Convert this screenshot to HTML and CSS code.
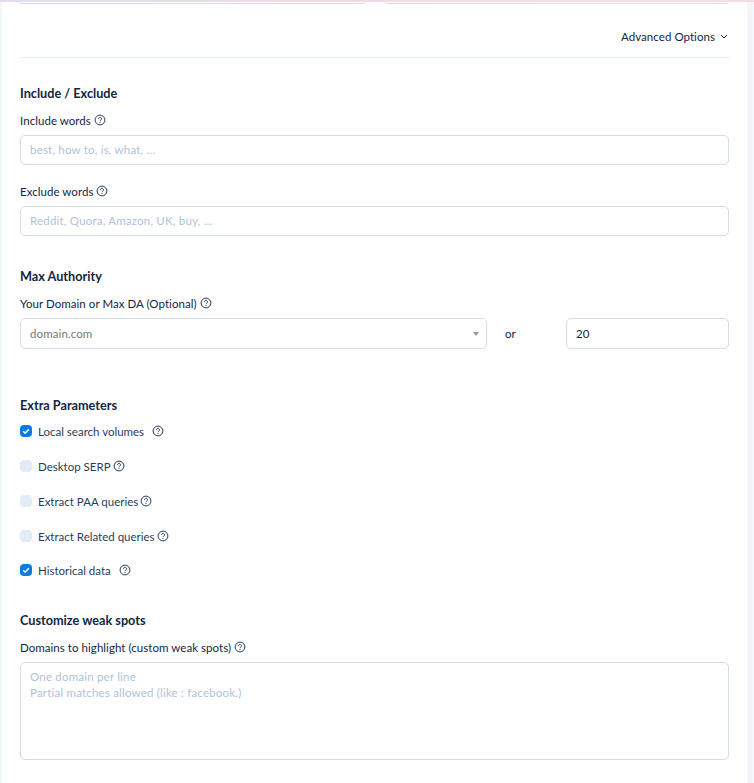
FILE: index.html
```html
<!DOCTYPE html>
<html lang="en">
<head>
    <meta charset="UTF-8">
    <title>Advanced Options</title>
    <link rel="stylesheet" href="styles.css">
</head>
<body>

<svg class="sprite" width="0" height="0">
    <symbol id="help" viewBox="0 0 12 12">
        <circle cx="6" cy="6" r="4.9" fill="none" stroke="currentColor" stroke-width="1"/>
        <path d="M4.5 4.8a1.5 1.5 0 1 1 2.3 1.3c-.5.3-.8.6-.8 1.1" fill="none" stroke="currentColor" stroke-width="1"/>
        <circle cx="6" cy="8.6" r=".6" fill="currentColor"/>
    </symbol>
    <symbol id="tick" viewBox="0 0 12 12">
        <path d="M3.2 6.2l2 2 3.6-4" fill="none" stroke="#fff" stroke-width="1.6"/>
    </symbol>
</svg>

<div class="top-strip"></div>

<main class="card">
    <div class="top-inputs">
        <div class="top-input"></div>
        <div class="top-input top-input-right"></div>
    </div>

    <div class="advanced">
        <span>Advanced Options</span>
        <svg class="chevron" width="8" height="5" viewBox="0 0 8 5"><path d="M1 1l3 3 3-3" fill="none" stroke="currentColor" stroke-width="1"/></svg>
    </div>

    <!-- Include / Exclude -->
    <section class="include">
        <h3>Include / Exclude</h3>
        <label class="field-label">Include words <svg class="help"><use href="#help"/></svg></label>
        <input class="input" type="text" placeholder="best, how to, is, what, ...">
        <label class="field-label exclude-label">Exclude words <svg class="help"><use href="#help"/></svg></label>
        <input class="input" type="text" placeholder="Reddit, Quora, Amazon, UK, buy, ...">
    </section>

    <!-- Max Authority -->
    <section class="authority">
        <h3>Max Authority</h3>
        <label class="field-label">Your Domain or Max DA (Optional) <svg class="help"><use href="#help"/></svg></label>
        <div class="authority-row">
            <div class="select">
                <span>domain.com</span>
                <i class="select-arrow"></i>
            </div>
            <span class="or">or</span>
            <input class="input max-da" type="text" value="20">
        </div>
    </section>

    <!-- Extra Parameters -->
    <section class="extra">
        <h3>Extra Parameters</h3>
        <div class="check"><span class="box box-on"><svg width="12" height="12"><use href="#tick"/></svg></span>Local search volumes <svg class="help help-far"><use href="#help"/></svg></div>
        <div class="check"><span class="box"></span>Desktop SERP <svg class="help"><use href="#help"/></svg></div>
        <div class="check"><span class="box"></span>Extract PAA queries <svg class="help"><use href="#help"/></svg></div>
        <div class="check"><span class="box"></span>Extract Related queries <svg class="help"><use href="#help"/></svg></div>
        <div class="check check-last"><span class="box box-on"><svg width="12" height="12"><use href="#tick"/></svg></span>Historical data <svg class="help help-far"><use href="#help"/></svg></div>
    </section>

    <!-- Customize weak spots -->
    <section class="weak">
        <h3>Customize weak spots</h3>
        <label class="field-label">Domains to highlight (custom weak spots) <svg class="help"><use href="#help"/></svg></label>
        <textarea class="input textarea" placeholder="One domain per line&#10;Partial matches allowed (like : facebook.)"></textarea>
    </section>
</main>

</body>
</html>
```

FILE: styles.css
```css
* {
    box-sizing: border-box;
}
html, body {
    height: 783px;
    overflow: hidden;
}
body {
    margin: 0;
    padding: 0 7px 0 2px;
    background-color: #f3f6fb;
    font-family: Lato, sans-serif;
    font-size: 11.5px;
    color: #12263f;
}
.sprite {
    position: absolute;
}
.top-strip {
    height: 2px;
    margin: 0 -7px 0 -2px;
    background: linear-gradient(90deg, #e6dcec, #f3dfe2);
}
.card {
    background-color: #fff;
    height: 781px;
    padding: 0 18px;
}
h3 {
    margin: 0;
    padding-bottom: 2px;
    font-size: 12.7px;
    line-height: 14px;
    font-weight: 700;
    color: #12263f;
}
.top-inputs {
    display: flex;
    gap: 20px;
    height: 2px;
}
.top-input {
    width: 345px;
    border: 1px solid #d2ddec;
    border-top: 0;
    border-radius: 0 0 6px 6px;
}
.top-input-right {
    width: 343px;
}
.advanced {
    display: flex;
    align-items: center;
    justify-content: flex-end;
    gap: 5px;
    height: 54px;
    padding: 12px 1px 0 0;
    border-bottom: 1px solid #e3ebf6;
    letter-spacing: .05px;
}
.chevron {
    color: #12263f;
}
.field-label {
    display: flex;
    align-items: center;
    gap: 3px;
    height: 16px;
    margin-top: 10px;
    color: #12263f;
    letter-spacing: .05px;
}
.help {
    width: 12px;
    height: 12px;
    color: #283e59;
}
.help-far {
    margin-left: 6px;
}
.input {
    display: block;
    width: 100%;
    height: 30px;
    margin-top: 7px;
    padding: 0 9px 2px;
    border: 1px solid #d2ddec;
    border-radius: 5px;
    background-color: #fff;
    font-family: inherit;
    font-size: 11.5px;
    color: #12263f;
    outline: none;
}
.input::placeholder {
    color: #b1c2d9;
    opacity: 1;
    letter-spacing: .2px;
}
.include {
    margin-top: 28px;
}
.exclude-label {
    margin-top: 18px;
}
.authority {
    margin-top: 33px;
}
.authority-row {
    display: flex;
    align-items: center;
    margin-top: 7px;
}
.select {
    display: flex;
    align-items: center;
    justify-content: space-between;
    width: 467px;
    height: 31px;
    padding: 0 7px 0 9px;
    border: 1px solid #d2ddec;
    border-radius: 5px;
    color: #777;
    letter-spacing: .1px;
}
.select-arrow {
    width: 0;
    height: 0;
    border-left: 3px solid transparent;
    border-right: 3px solid transparent;
    border-top: 4px solid #999;
}
.or {
    width: 79px;
    padding-left: 18px;
    color: #12263f;
}
.max-da {
    width: 163px;
    height: 31px;
    margin-top: 0;
    padding-bottom: 0;
}
.extra {
    margin-top: 49px;
}
.check {
    display: flex;
    align-items: center;
    height: 16px;
    margin-top: 19px;
    gap: 2px;
    color: #283e59;
}
.extra h3 + .check {
    margin-top: 9px;
}
.check-last {
    margin-top: 18px;
}
.box {
    display: flex;
    align-items: center;
    justify-content: center;
    width: 12px;
    height: 12px;
    margin-right: 4px;
    border-radius: 4px;
    background-color: #e3ebf6;
}
.box-on {
    background-color: #0a7be0;
}
.weak {
    margin-top: 35px;
}
.textarea {
    height: 98px;
    padding: 6px 9px;
    line-height: 16px;
    resize: none;
}
```
